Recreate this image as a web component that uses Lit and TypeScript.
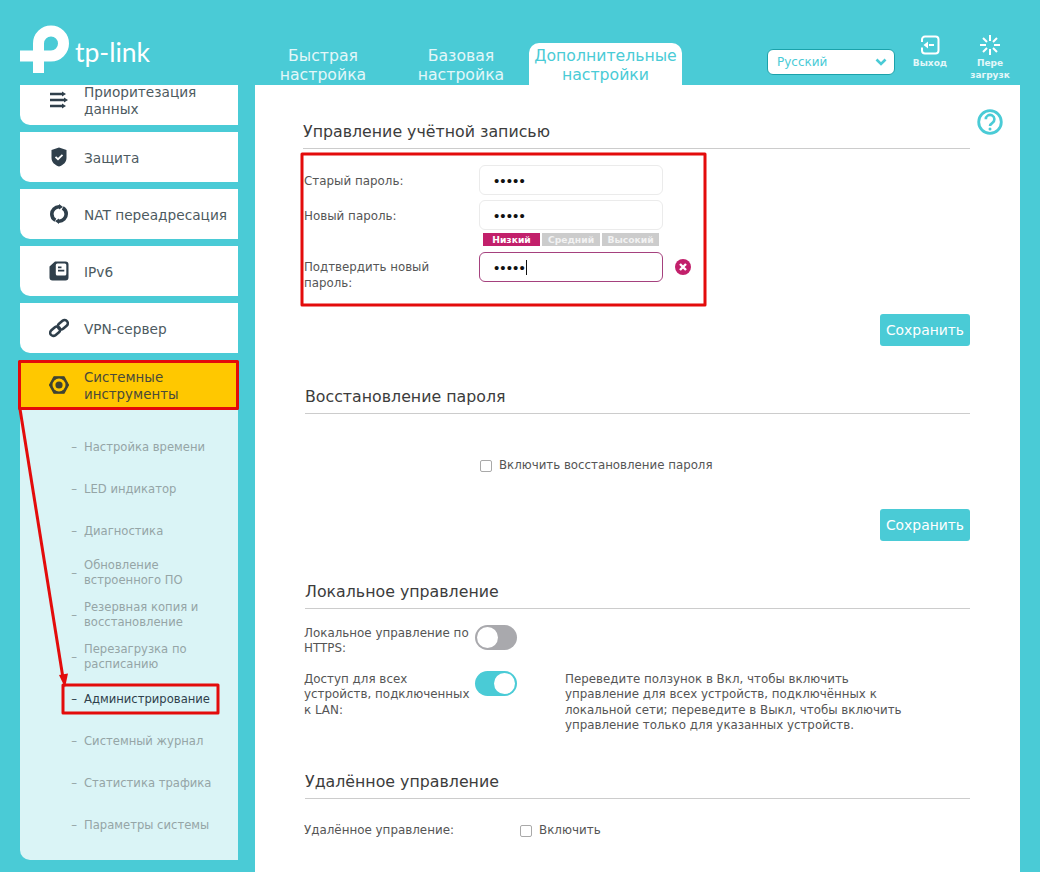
import { LitElement, html, css, svg } from "lit";
import { customElement } from "lit/decorators.js";

const ICONS: Record<string, unknown> = {
  list: svg`<path d="M1 4h13M1 10h14M1 16h13" stroke="currentColor" stroke-width="2.4" fill="none"/><path d="M13 1.5l4 2.5-4 2.5zM15 7.5l4 2.5-4 2.5zM13 13.5l4 2.5-4 2.5z" fill="currentColor"/>`,
  shield: svg`<path d="M10 0.5l7.500 2.500v8c0 4.500-3.500 7-7.500 8.500C6 18 2.500 15.500 2.500 11V3z" fill="currentColor"/><path d="M6.500 9.800l2.500 2.400 4.500-4.400" stroke="#fff" stroke-width="1.800" fill="none"/>`,
  nat: svg`<circle cx="10" cy="10" r="7.200" fill="none" stroke="currentColor" stroke-width="3.600" stroke-dasharray="19 3.620" stroke-dashoffset="-15"/><path d="M10 0l4 3-4 2.500zM10 20l-4-3 4-2.500z" fill="currentColor"/>`,
  page: svg`<path d="M6 0.500h10.500a3 3 0 0 1 3 3v13a3 3 0 0 1-3 3H3.500a3 3 0 0 1-3-3V5.500z" fill="currentColor"/><rect x="6.800" y="2.600" width="10.500" height="12" rx="1.500" fill="#fff"/><path d="M9 6.300h3.500M9 9.700h6.300" stroke="currentColor" stroke-width="1.800"/>`,
  link: svg`<g fill="none" stroke="currentColor" stroke-width="2.600" transform="rotate(-40 10 10)"><rect x="-0.500" y="6.800" width="11" height="6.400" rx="3.200"/><rect x="9.500" y="6.800" width="11" height="6.400" rx="3.200"/></g>`,
  gear: svg`<path d="M0.500 10L5 1.800h10L19.500 10 15 18.200H5z" fill="currentColor" stroke="currentColor" stroke-width="1.200" stroke-linejoin="round"/><circle cx="10" cy="10" r="6.500" fill="#ffc800"/><circle cx="10" cy="10" r="3.600" fill="currentColor"/>`,
};

const MENU = [
  { icon: "list", lines: "Приоритезация данных" },
  { icon: "shield", lines: "Защита" },
  { icon: "nat", lines: "NAT переадресация" },
  { icon: "page", lines: "IPv6" },
  { icon: "link", lines: "VPN-сервер" },
];
const SUB = [
  "Настройка времени",
  "LED индикатор",
  "Диагностика",
  "Обновление встроенного ПО",
  "Резервная копия и восстановление",
  "Перезагрузка по расписанию",
  "Администрирование",
  "Системный журнал",
  "Статистика трафика",
  "Параметры системы",
];

@customElement("app-root")
export class AppRoot extends LitElement {
  static styles = css`
    :host {
      display: block;
      position: relative;
      height: 872px;
      overflow: hidden;
      background: #4acbd6;
      font-family: "DejaVu Sans", Verdana, sans-serif;
      font-size: 11.900px;
      color: #555;
    }
    * { box-sizing: border-box; }

    header { height: 85px; display: flex; align-items: flex-end; position: relative; }
    .logo { width: 254px; height: 85px; display: flex; align-items: flex-start; padding: 24px 0 0 20px; flex: none; }
    .logo svg { width: 50px; height: 50px; flex: none; }
    .wordmark { font-family: Lato, sans-serif; font-size: 26.500px; line-height: 30px; color: #fff; margin: 13px 0 0 5px; }
    .tabs { display: flex; }
    .tab { width: 138px; height: 42px; padding-top: 3px; text-align: center; font-size: 15.700px; line-height: 19px; white-space: nowrap; color: #e3f7f9; }
    .tab.on { width: 153px; margin-left: -1px; background: #fff; color: #4acbd6; border-radius: 10px 10px 0 0; }
    .lang {
      margin: 0 0 10px 85px; width: 128px; height: 26px; background: #fff; border: 1px solid #1ba2ab; border-radius: 6px;
      color: #4acbd6; font-size: 12px; display: flex; align-items: center; justify-content: space-between; padding: 0 7px 0 9px;
    }
    .lang svg { width: 12px; height: 8px; }
    .action { width: 60px; align-self: flex-start; margin-top: 35px; display: flex; flex-direction: column; align-items: center; color: #e3f7f9; font-size: 9px; font-weight: bold; line-height: 12px; text-align: center; }
    .action svg { width: 20px; height: 20px; margin-bottom: 2px; flex: none; }
    .action.first { margin-left: 5px; }

    .body { display: flex; gap: 17px; padding: 0 20px; height: 787px; }
    aside { width: 218px; height: 775px; overflow: hidden; display: flex; flex-direction: column; gap: 7px; flex: none; }
    .item {
      flex: none; height: 50px; display: flex; align-items: center; background: #fff; border-radius: 0 0 0 10px;
      color: #4d5a5f; font-size: 13.700px; line-height: 17px;
    }
    aside > .item:first-child { margin-top: -10px; }
    .item .ic { width: 64px; display: flex; justify-content: center; padding-left: 13px; color: #2f3f4b; flex: none; }
    .item svg { width: 20px; height: 20px; }
    .item .tx { width: 130px; padding-top: 2px; }
    .item.nowrap .tx { white-space: nowrap; }
    .group { flex: none; }
    .group .item { background: #ffc800; border-radius: 0; color: #4a4a3a; font-size: 13.400px; }
    .group .item .ic { color: #3f4433; }
    .subs { background: #daf4f6; border-radius: 0 0 0 10px; padding: 16px 0 13px; height: 450px; }
    .sub { height: 42px; display: flex; align-items: center; color: #95a5a6; font-size: 11.600px; line-height: 15px; }
    .sub.on { color: #2f3f4b; }
    .sub i { font-style: normal; width: 64px; text-align: right; padding-right: 7px; flex: none; }
    .sub span { width: 130px; }

    main { position: relative; width: 765px; height: 787px; background: #fff; padding: 36px 50px 0; flex: none; }
    .help { position: absolute; left: 722px; top: 24px; width: 26px; height: 26px; }
    h2 { margin: 0; height: 28px; font-weight: normal; font-size: 15.800px; line-height: 22px; color: #3c3c3c; border-bottom: 1px solid #ccc; }
    h2.shift { margin-left: -2px; }
    section + section { margin-top: 40px; }

    .form { display: grid; grid-template-columns: 175px 184px 28px; margin: 16px 0 0 -1px; row-gap: 5px; }
    .lbl { line-height: 15px; align-self: center; padding-top: 2px; }
    .lbl.top { align-self: start; padding-top: 8px; line-height: 15.500px; font-size: 11.800px; }
    .pw { height: 30px; border: 1px solid #ebebeb; border-radius: 6px; padding-left: 14px; display: flex; align-items: center; color: #111; font-family: "Liberation Sans", sans-serif; font-size: 15px; letter-spacing: 1.100px; }
    .pw.bad { border-color: #a5417e; }
    .pw b { width: 1px; height: 15px; background: #111; }
    .meter { grid-column: 2 / 4; display: flex; gap: 2px; padding-left: 4px; margin: -2px 0 1px; }
    .meter span { width: 57px; height: 13px; background: #ccc; color: #f2f2f2; font-size: 9.200px; font-weight: bold; line-height: 13px; text-align: center; }
    .meter span.mid { width: 58px; }
    .meter span.on { background: #c2206b; color: #fff; }
    .clear { width: 16px; height: 16px; margin: 7px 0 0 12px; }
    .bar { display: flex; justify-content: flex-end; margin-top: 23px; }
    .bar.after { margin-top: 36px; }
    button { width: 90px; height: 32px; border: 0; border-radius: 3px; background: #4acbd6; color: #fff; font: inherit; font-size: 13.900px; padding: 0; }
    .check { display: flex; align-items: center; gap: 7px; line-height: 15px; }
    .check i { width: 12px; height: 12px; border: 1px solid #a9a9a9; border-radius: 2px; background: #fff; flex: none; }
    .recover { margin: 44px 0 0 175px; font-size: 11.800px; }
    .rows { display: flex; flex-direction: column; gap: 14px; margin: 16px 0 -2px -1px; }
    .row { display: grid; grid-template-columns: 171px 42px 48px 345px; line-height: 15.400px; }
    .row p { margin: 0; padding-top: 1px; }
    .row p.desc { font-size: 11.850px; }
    .toggle { width: 42px; height: 25px; border-radius: 13px; background: #a9a9ad; position: relative; }
    .toggle::after { content: ""; position: absolute; top: 2px; left: 2px; width: 21px; height: 21px; border-radius: 50%; background: #fff; }
    .toggle.on { background: #4acbd6; }
    .toggle.on::after { left: 19px; }
    .remote { display: grid; grid-template-columns: 216px auto; margin: 24px 0 0 -1px; line-height: 15px; }

    .overlay { position: absolute; inset: 0; width: 1040px; height: 872px; pointer-events: none; }
  `;

  private label(text: string) {
    return html`<div class="lbl">${text}</div>`;
  }

  render() {
    return html`
      <header>
        <div class="logo">
          <svg viewBox="0 0 50 50">
            <path d="M18.500 49V19.500a12.500 12.500 0 1 1 12.500 12.500H0" fill="none" stroke="#fff" stroke-width="11"/>
          </svg>
          <span class="wordmark">tp-link</span>
        </div>
        <nav class="tabs">
          <div class="tab">Быстрая<br />настройка</div>
          <div class="tab">Базовая<br />настройка</div>
          <div class="tab on">Дополнительные<br />настройки</div>
        </nav>
        <div class="lang">
          <span>Русский</span>
          <svg viewBox="0 0 12 8"><path d="M1.500 1.500L6 6l4.500-4.500" fill="none" stroke="#4acbd6" stroke-width="2.600"/></svg>
        </div>
        <div class="action first">
          <svg viewBox="0 0 20 20">
            <path d="M5 1.500h10.500a3 3 0 0 1 3 3v11a3 3 0 0 1-3 3H5a3 3 0 0 1-3-3v-3M2 7V4.500a3 3 0 0 1 3-3" fill="none" stroke="#fff" stroke-width="2"/>
            <path d="M3.500 10l4.500-3.500v7zM9 9h5v2H9z" fill="#fff"/>
          </svg>
          <span>Выход</span>
        </div>
        <div class="action">
          <svg viewBox="0 0 20 20">
            <path d="M10 0v6M10 14v6M0 10h6M14 10h6M3 3l4 4M17 3l-4 4M3 17l4-4M17 17l-4-4" stroke="#fff" stroke-width="2"/>
          </svg>
          <span>Пере<br />загрузк</span>
        </div>
      </header>

      <div class="body">
        <aside>
          ${MENU.map(
            (m) => html`<div class="item ${m.icon === "nat" ? "nowrap" : ""}">
              <span class="ic"><svg viewBox="0 0 20 20">${ICONS[m.icon]}</svg></span>
              <span class="tx">${m.lines}</span>
            </div>`
          )}
          <div class="group">
            <div class="item">
              <span class="ic"><svg viewBox="0 0 20 20">${ICONS.gear}</svg></span>
              <span class="tx">Системные инструменты</span>
            </div>
            <div class="subs">
              ${SUB.map(
                (s) => html`<div class="sub ${s === "Администрирование" ? "on" : ""}"><i>–</i><span>${s}</span></div>`
              )}
            </div>
          </div>
        </aside>

        <main>
          <svg class="help" viewBox="0 0 26 26">
            <circle cx="13" cy="13" r="11.300" fill="none" stroke="#4acbd6" stroke-width="2.800"/>
            <path d="M8.800 10.300a4.300 4.300 0 1 1 6.600 3.500c-1.500 1-2.400 1.700-2.400 3.200" fill="none" stroke="#4acbd6" stroke-width="2.600"/>
            <circle cx="13" cy="20" r="1.500" fill="#4acbd6"/>
          </svg>

          <section>
            <h2 class="shift">Управление учётной записью</h2>
            <div class="form">
              ${this.label("Старый пароль:")}
              <div class="pw">•••••</div>
              <div></div>
              ${this.label("Новый пароль:")}
              <div class="pw">•••••</div>
              <div></div>
              <div></div>
              <div class="meter"><span class="on">Низкий</span><span class="mid">Средний</span><span>Высокий</span></div>
              <div class="lbl top">Подтвердить новый пароль:</div>
              <div class="pw bad">•••••<b></b></div>
              <svg class="clear" viewBox="0 0 16 16">
                <circle cx="8" cy="8" r="8" fill="#c2206b"/>
                <path d="M5 5l6 6M11 5l-6 6" stroke="#fff" stroke-width="2.400"/>
              </svg>
            </div>
            <div class="bar"><button>Сохранить</button></div>
          </section>

          <section>
            <h2>Восстановление пароля</h2>
            <div class="check recover"><i></i>Включить восстановление пароля</div>
            <div class="bar after"><button>Сохранить</button></div>
          </section>

          <section>
            <h2>Локальное управление</h2>
            <div class="rows">
              <div class="row">
                <p>Локальное управление по HTTPS:</p>
                <div class="toggle"></div>
              </div>
              <div class="row">
                <p>Доступ для всех устройств, подключенных к LAN:</p>
                <div class="toggle on"></div>
                <div></div>
                <p class="desc">Переведите ползунок в Вкл, чтобы включить управление для всех устройств, подключённых к локальной сети; переведите в Выкл, чтобы включить управление только для указанных устройств.</p>
              </div>
            </div>
          </section>

          <section>
            <h2>Удалённое управление</h2>
            <div class="remote">
              <span>Удалённое управление:</span>
              <div class="check"><i></i>Включить</div>
            </div>
          </section>
        </main>
      </div>

      <svg class="overlay" viewBox="0 0 1040 872">
        <g fill="none" stroke="#e30b0b" stroke-width="3" stroke-linejoin="round">
          <rect x="302" y="154" width="403" height="151"/>
          <rect x="19.500" y="361.500" width="218" height="47"/>
          <rect x="63" y="685" width="155" height="28"/>
          <path d="M20 409L63 678"/>
        </g>
        <path d="M59 675l9-1.500-3 14z" fill="#e30b0b"/>
      </svg>
    `;
  }
}
